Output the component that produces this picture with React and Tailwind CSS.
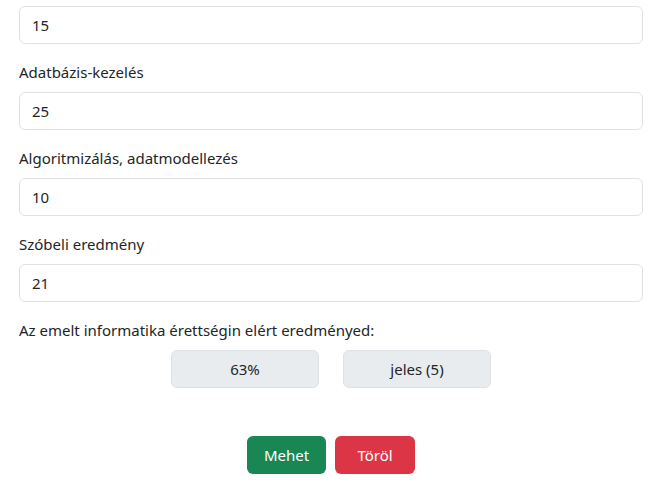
export default function App() {
    const fields = [
        { label: null, value: "15" },
        { label: "Adatbázis-kezelés", value: "25" },
        { label: "Algoritmizálás, adatmodellezés", value: "10" },
        { label: "Szóbeli eredmény", value: "21" },
    ];

    return (
        <div className="min-h-screen bg-white pl-[19px] pr-[23px] pt-[6px] text-[15px] leading-[24px] text-[#212529] font-['Noto_Sans',sans-serif]">
            {fields.map((f, i) => (
                <div key={i} className="mb-4">
                    {f.label && <label className="block mb-2">{f.label}</label>}
                    <input
                        type="text"
                        defaultValue={f.value}
                        className="block w-full h-[38px] px-3 border border-[#dee2e6] rounded-md bg-white text-[#212529] outline-none"
                    />
                </div>
            ))}

            <div className="mb-2">Az emelt informatika érettségin elért eredményed:</div>
            <div className="flex justify-center gap-6">
                <div className="w-[148px] h-[38px] flex items-center justify-center bg-[#e9ecef] border border-[#dee2e6] rounded-md">63%</div>
                <div className="w-[148px] h-[38px] flex items-center justify-center bg-[#e9ecef] border border-[#dee2e6] rounded-md">jeles (5)</div>
            </div>

            <div className="flex justify-center gap-[9px] mt-12">
                <button className="w-[79px] h-[38px] rounded-md bg-[#198754] text-white">Mehet</button>
                <button className="w-[80px] h-[38px] rounded-md bg-[#dc3545] text-white">Töröl</button>
            </div>
        </div>
    );
}
